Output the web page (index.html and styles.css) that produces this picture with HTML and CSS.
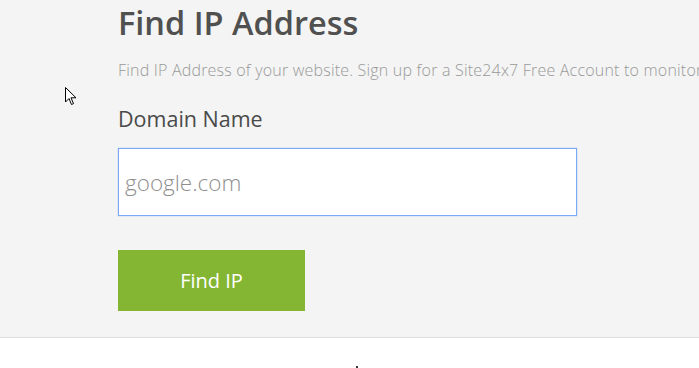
FILE: index.html
```html
<!DOCTYPE html>
<html lang="en">
<head>
<meta charset="UTF-8">
<meta name="viewport" content="width=device-width, initial-scale=1.0">
<title>Find IP Address</title>
<link rel="stylesheet" href="styles.css">
</head>
<body>
<div class="tool-section">
  <div class="container">
    <h1>Find IP Address</h1>
    <p class="subtitle">Find IP Address of your website. Sign up for a Site24x7 Free Account to monitor</p>
    <form class="lookup-form" onsubmit="return false;">
      <label class="field-label" for="domain">Domain Name</label>
      <input class="domain-input" id="domain" type="text" placeholder="google.com">
      <button class="find-button" type="submit">Find IP</button>
    </form>
  </div>
  <svg class="cursor" width="12" height="19" viewBox="0 0 12 19">
    <path d="M0.5 0.5 L0.5 15 L4 11.5 L6.5 17.5 L8.5 16.6 L6 10.8 L11 10.8 Z" fill="#fff" stroke="#000" stroke-width="1"/>
  </svg>
</div>
<div class="footer-area">
  <span class="tick"></span>
</div>
</body>
</html>
```

FILE: styles.css
```css
body {
  font-family: "Open Sans", "Liberation Sans", sans-serif;
  margin: 0;
  background-color: #fff;
  overflow: hidden;
}

.tool-section {
  position: relative;
  background-color: #f3f4f3;
  border-bottom: 1px solid #dcdcdc;
  height: 337px;
  overflow: hidden;
}

.container {
  padding-left: 118px;
}

h1 {
  margin: 0;
  padding-top: 3px;
  font-size: 32.5px;
  font-weight: 600;
  color: #505050;
  line-height: 40px;
}

.subtitle {
  margin: 17px 0 0;
  font-size: 16px;
  font-weight: 300;
  letter-spacing: 0.2px;
  color: #999;
  white-space: nowrap;
  line-height: 20px;
}

.lookup-form {
  display: flex;
  flex-direction: column;
  align-items: flex-start;
}

.field-label {
  margin-top: 25px;
  font-size: 21.5px;
  color: #4a4a4a;
  line-height: 28px;
}

.domain-input {
  box-sizing: border-box;
  margin-top: 15px;
  width: 459px;
  height: 68px;
  padding: 0 6px;
  font-family: inherit;
  font-size: 22.5px;
  font-weight: 300;
  color: #444;
  background-color: #fff;
  border: 1px solid #7ba9f5;
  box-shadow: 0 0 1px #7ba9f5;
  outline: none;
}

.domain-input::placeholder {
  color: #8f8f8f;
}

.find-button {
  margin-top: 34px;
  width: 187px;
  height: 61px;
  font-family: inherit;
  font-size: 20px;
  color: #fff;
  background-color: #84b633;
  border: none;
  cursor: pointer;
}

.cursor {
  position: absolute;
  left: 65px;
  top: 87px;
}

.footer-area {
  position: relative;
  height: 40px;
}

.tick {
  position: absolute;
  left: 356px;
  top: 28px;
  width: 2px;
  height: 2px;
  background-color: #333;
}
```
